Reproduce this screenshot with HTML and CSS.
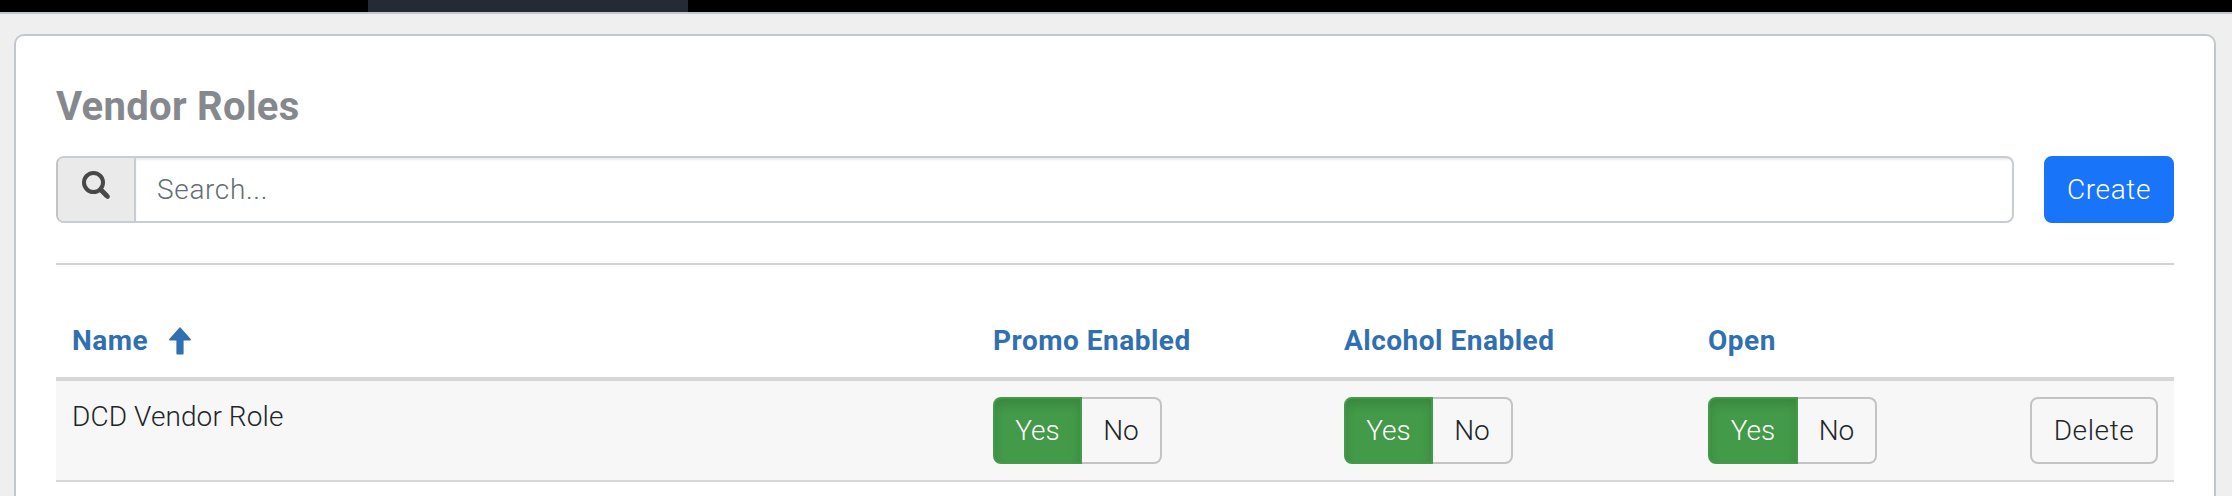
FILE: index.html
```html
<!DOCTYPE html>
<html lang="en">
<head>
<meta charset="utf-8">
<title>Vendor Roles</title>
<link rel="stylesheet" href="styles.css">
</head>
<body>
<nav class="topbar"><span class="topbar-tab"></span></nav>
<main class="card">
  <h1 class="title">Vendor Roles</h1>
  <div class="toolbar">
    <div class="search">
      <span class="search-addon">
        <svg width="28" height="28" viewBox="0 0 28 28" fill="none" stroke="#484848"><circle cx="11.5" cy="11.5" r="9.5" stroke-width="4"/><path d="M18.3 18.3 25 25" stroke-width="5"/><path d="M24.6 24.6 25.6 25.6" stroke-width="4.4" stroke-linecap="round"/></svg>
      </span>
      <div class="search-field">Search...</div>
    </div>
    <button class="btn btn-primary">Create</button>
  </div>
  <hr class="divider">
  <div class="row head">
    <div class="cell">Name<svg class="sort" width="22" height="28" viewBox="0 0 22 28" fill="#3170b0"><path d="M11 0 21.7 12q.6 1.4-.7 1.4H14.6V26.4Q14.6 27.6 13.4 27.6H8.6Q7.4 27.6 7.4 26.4V13.4H1Q-.3 13.4.3 12Z"/></svg></div>
    <div class="cell">Promo Enabled</div>
    <div class="cell">Alcohol Enabled</div>
    <div class="cell">Open</div>
    <div class="cell"></div>
  </div>
  <div class="row item">
    <div class="cell item-name">DCD Vendor Role</div>
    <div class="cell"><div class="toggle"><button class="btn yes">Yes</button><button class="btn no">No</button></div></div>
    <div class="cell"><div class="toggle"><button class="btn yes">Yes</button><button class="btn no">No</button></div></div>
    <div class="cell"><div class="toggle toggle-open"><button class="btn yes">Yes</button><button class="btn no">No</button></div></div>
    <div class="cell"><button class="btn delete">Delete</button></div>
  </div>
</main>
</body>
</html>
```
FILE: styles.css
```css
* { box-sizing: border-box; }
body {
  margin: 0;
  background: #efefef;
  color: #212529;
  font: 300 28px/40px Roboto, "Liberation Sans", sans-serif;
}
.topbar {
  height: 14px;
  padding-left: 368px;
  background: #000;
  border-bottom: 2px solid #c3c8cd;
}
.topbar-tab { display: block; width: 320px; height: 12px; background: #252b35; }
.card {
  height: calc(100vh - 34px);
  margin: 20px 16px 0 14px;
  padding: 46px 40px 0;
  background: #fff;
  border: 2px solid #c2c7cf;
  border-bottom: 0;
  border-radius: 10px 10px 0 0;
}
.title {
  margin: 0;
  height: 48px;
  color: #85888d;
  font-size: 40px;
  font-weight: 700;
  line-height: 49px;
  letter-spacing: .3px;
}
.toolbar { display: flex; gap: 30px; height: 67px; margin-top: 26px; }
.search {
  display: flex;
  flex: 1;
  border: 2px solid #c8ccd3;
  border-left-color: #c3c3c3;
  border-radius: 8px;
  overflow: hidden;
}
.search-addon {
  width: 78px;
  padding: 13px 0 0 24px;
  background: #eaeaea;
  border-right: 2px solid #c8ccd3;
}
.search-addon svg { display: block; }
.search-field {
  flex: 1;
  padding: 12px 21px 11px;
  color: #646c73;
  letter-spacing: .65px;
  box-shadow: inset 0 2px 2px rgba(0, 0, 0, .075);
}
.btn {
  height: 67px;
  padding: 1px 0 0;
  border: 2px solid #c3c3c3;
  border-radius: 8px;
  background: transparent;
  color: #212529;
  font: inherit;
}
.btn-primary {
  width: 130px;
  border-color: #1874f8;
  background: #1874f8;
  color: #fff;
  letter-spacing: .6px;
}
.divider { height: 2px; margin: 40px 0 0; border: 0; background: #d1d2d3; }
.row {
  display: grid;
  grid-template-columns: 921px 351px 364px 322px 160px;
}
.cell { padding: 16px; }
.head {
  height: 116px;
  border-bottom: 4px solid #d6d6d6;
  color: #3170b0;
  font-weight: 700;
  letter-spacing: .5px;
}
.head .cell { display: flex; padding-top: 56px; }
.sort { margin: 6px 0 0 21px; }
.item { height: 101px; background: #f7f7f7; border-bottom: 2px solid #d6d6d6; }
.item-name { letter-spacing: .1px; }
.toggle { display: flex; width: 169px; }
.yes {
  width: 89px;
  border-color: #439a48;
  border-radius: 8px 0 0 8px;
  background: #439a48;
  color: #fff;
  box-shadow: inset 0 6px 10px rgba(0, 0, 0, .125);
}
.no { flex: 1; border-left: 0; border-radius: 0 8px 8px 0; }
.toggle-open .yes { width: 90px; }
.delete { display: block; width: 128px; letter-spacing: .6px; }
```
